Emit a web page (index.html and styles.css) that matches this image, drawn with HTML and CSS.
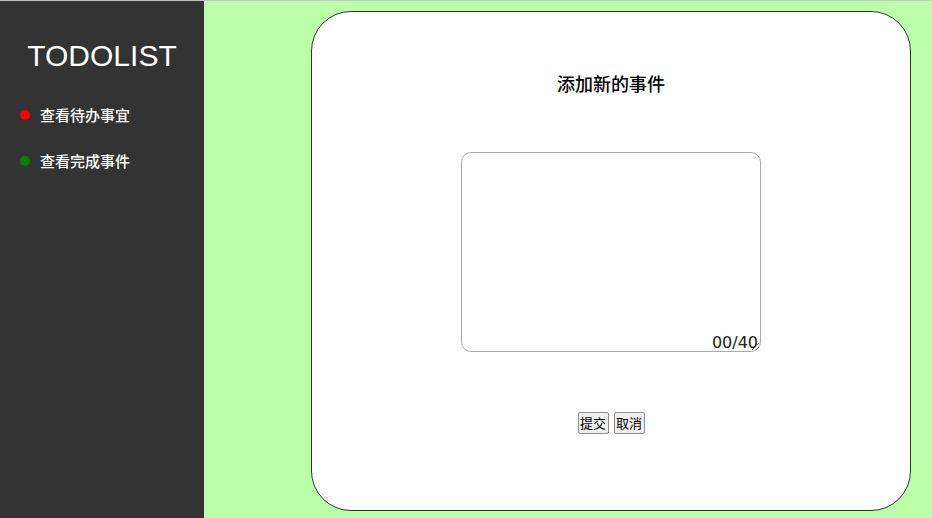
FILE: index.html
```html
<!DOCTYPE html>
<html lang="zh-CN">
<head>
<meta charset="utf-8">
<title>TODOLIST</title>
<link rel="stylesheet" href="styles.css">
</head>
<body>
<div class="app">
  <aside class="sidebar">
    <h1 class="logo">TODOLIST</h1>
    <ul class="nav">
      <li class="nav-item"><span class="dot dot-red"></span><span>查看待办事宜</span></li>
      <li class="nav-item"><span class="dot dot-green"></span><span>查看完成事件</span></li>
    </ul>
  </aside>
  <main class="main">
    <section class="card">
      <h2 class="card-title">添加新的事件</h2>
      <div class="editor">
        <textarea class="input" maxlength="40"></textarea>
        <span class="counter">00/40</span>
      </div>
      <div class="actions">
        <button class="btn">提交</button>
        <button class="btn">取消</button>
      </div>
    </section>
  </main>
</div>
</body>
</html>
```

FILE: styles.css
```css
* { box-sizing: border-box; }
html, body { margin: 0; padding: 0; height: 100%; }
body {
  border-top: 1px solid #c4c4c4;
  font-family: "Noto Sans CJK SC", "Liberation Sans", sans-serif;
  overflow: hidden;
}
.app {
  display: flex;
  height: 517px;
}
.sidebar {
  width: 204px;
  background: #333333;
  color: #ffffff;
  padding-top: 37px;
}
.logo {
  margin: 0;
  font-family: "Liberation Sans", Arial, sans-serif;
  font-weight: normal;
  font-size: 30px;
  line-height: 36px;
  text-align: center;
}
.nav {
  list-style: none;
  margin: 31px 0 0;
  padding: 0;
  display: flex;
  flex-direction: column;
  gap: 26px;
}
.nav-item {
  display: flex;
  align-items: center;
  gap: 10px;
  padding-left: 20px;
  font-size: 15px;
  font-weight: 500;
  line-height: 20px;
}
.dot {
  width: 10px;
  height: 10px;
  border-radius: 50%;
}
.dot-red { background: #ff0000; }
.dot-green { background: #008000; }
.main {
  flex: 1;
  background: #bbffaa;
  padding: 10px 0 0 107px;
}
.card {
  width: 600px;
  height: 500px;
  background: #ffffff;
  border: 1px solid #333333;
  border-radius: 40px;
  display: flex;
  flex-direction: column;
  align-items: center;
  padding-top: 59px;
}
.card-title {
  margin: 0;
  font-size: 18px;
  font-weight: 500;
  line-height: 24px;
  color: #000000;
}
.editor {
  position: relative;
  margin-top: 57px;
  width: 300px;
  height: 200px;
}
.input {
  display: block;
  width: 300px;
  height: 200px;
  border: 1px solid #a9a9a9;
  border-radius: 10px;
  resize: both;
  outline: none;
}
.counter {
  position: absolute;
  right: 3px;
  bottom: 0px;
  font-family: "DejaVu Sans", sans-serif;
  font-size: 16px;
  line-height: 18px;
  color: #222222;
}
.actions {
  margin-top: 60px;
  display: flex;
  gap: 5px;
}
.btn {
  width: 31px;
  height: 22px;
  padding: 0;
  font-family: "Noto Sans CJK SC", sans-serif;
  font-size: 13px;
  line-height: 18px;
  color: #000000;
  background: #efefef;
  border: 1px solid #8f8f8f;
  border-radius: 2px;
}
```
